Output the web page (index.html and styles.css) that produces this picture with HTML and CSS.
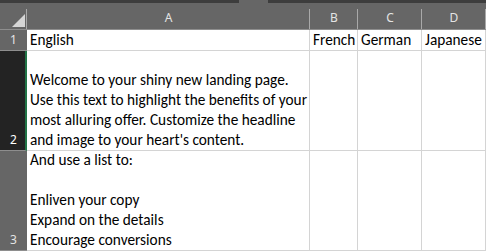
FILE: index.html
```html
<!DOCTYPE html>
<html>
<head>
<meta charset="utf-8">
<link rel="stylesheet" href="styles.css">
</head>
<body>
<div class="sheet">
  <div class="strip"><span class="seg seg1"></span><span class="seg-gap"></span><span class="seg seg2"></span></div>
  <div class="grid">
    <div class="colhdr corner"><span class="tri"></span></div>
    <div class="colhdr">A</div>
    <div class="colhdr">B</div>
    <div class="colhdr">C</div>
    <div class="colhdr">D</div>

    <div class="rowhdr">1</div>
    <div class="cell">English</div>
    <div class="cell">French</div>
    <div class="cell">German</div>
    <div class="cell">Japanese</div>

    <div class="rowhdr selected">2</div>
    <div class="cell multi">
Welcome to your shiny new landing page.
Use this text to highlight the benefits of your
most alluring offer. Customize the headline
and image to your heart's content.</div>
    <div class="cell"></div>
    <div class="cell"></div>
    <div class="cell"></div>

    <div class="rowhdr">3</div>
    <div class="cell multi">And use a list to:

Enliven your copy
Expand on the details
Encourage conversions</div>
    <div class="cell"></div>
    <div class="cell"></div>
    <div class="cell"></div>
  </div>
</div>
</body>
</html>
```

FILE: styles.css
```css
* { box-sizing: border-box; }
html, body { margin: 0; padding: 0; background: #ffffff; }
body { width: 486px; height: 251px; overflow: hidden; }

.sheet { width: 486px; display: flex; flex-direction: column; }

.strip { display: flex; height: 3px; background: #666666; }
.seg { background: #3d3d3d; }
.seg1 { width: 239px; }
.seg-gap { width: 29px; }
.seg2 { flex: 1; }

.grid {
  display: grid;
  grid-template-columns: 27px 283px 48px 64px 64px;
  grid-template-rows: 27px 21px 100px 100px;
}

.colhdr {
  background: linear-gradient(#a9a9a9, #a9a9a9) right bottom / 1px 20px no-repeat, #666666;
  color: #e4e4e4;
  font-family: "Noto Sans", "Open Sans", sans-serif;
  font-size: 12px;
  line-height: 16px;
  display: flex;
  align-items: flex-end;
  justify-content: center;
  padding-bottom: 3px;
  border-bottom: 1px solid #8e8e8e;
}
.colhdr:last-child { background: #666666; }
.corner { justify-content: flex-end; padding: 0 2px 2px 0; }
.tri {
  width: 13px; height: 13px;
  background: #d6d6d6;
  clip-path: polygon(100% 0, 100% 100%, 0 100%);
}

.rowhdr {
  background: #666666;
  color: #e4e4e4;
  font-family: "Noto Sans", "Open Sans", sans-serif;
  font-size: 12px;
  line-height: 16px;
  display: flex;
  align-items: flex-end;
  justify-content: center;
  padding-bottom: 2px;
  border-bottom: 1px solid #8e8e8e;
}
.rowhdr.selected {
  background: #232323;
  color: #ffffff;
  border-right: 2px solid #217346;
  padding-left: 2px;
}

.cell {
  border-right: 1px solid #d4d4d4;
  border-bottom: 1px solid #d4d4d4;
  font-family: "Carlito", "Lato", sans-serif;
  font-size: 15.3px;
  line-height: 20px;
  color: #000000;
  padding: 0 0 0 3px;
  display: flex;
  align-items: flex-end;
  white-space: nowrap;
}
.cell.multi { white-space: pre; }
```
